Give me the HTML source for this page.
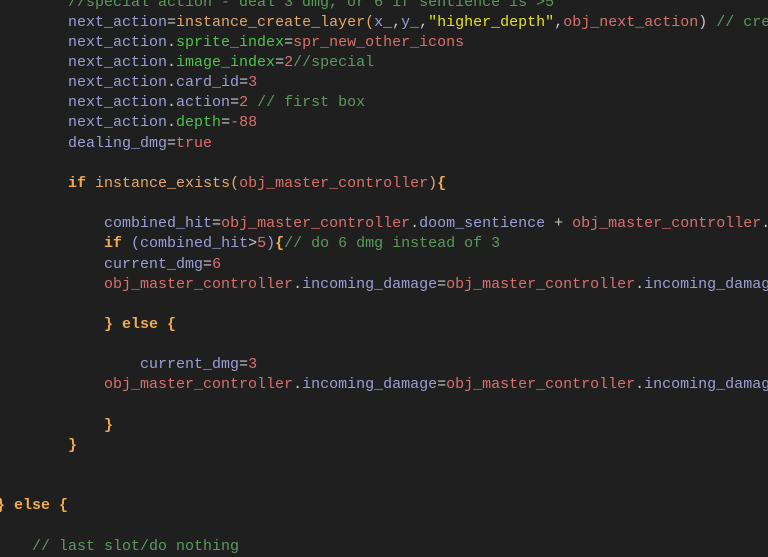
<!DOCTYPE html>
<html><head><meta charset="utf-8"><style>
html,body{margin:0;padding:0;background:#1f1f1f;width:768px;height:550px;overflow:hidden}
pre{position:absolute;left:-4px;top:-7.5px;margin:0;font-family:"Liberation Mono",monospace;font-size:15px;line-height:20.15px;color:#9b9fd6;white-space:pre;filter:blur(0.3px)}
.c{color:#5c9a5c}.f{color:#e3a86e}.g{color:#4fc24f}.r{color:#d9706c}.s{color:#e2e21f}.k{color:#efad4f;font-weight:bold}.p{color:#c8c8c8}
</style></head><body><pre>
        <span class="c">//special action - deal 3 dmg, or 6 if sentience is &gt;5</span>
        next_action<span class="p">=</span><span class="f">instance_create_layer(</span>x_<span class="p">,</span>y_<span class="p">,</span><span class="s">"higher_depth"</span><span class="p">,</span><span class="r">obj_next_action</span><span class="p">)</span> <span class="c">// create</span>
        next_action<span class="p">.</span><span class="g">sprite_index</span><span class="p">=</span><span class="r">spr_new_other_icons</span>
        next_action<span class="p">.</span><span class="g">image_index</span><span class="p">=</span><span class="r">2</span><span class="c">//special</span>
        next_action<span class="p">.</span>card_id<span class="p">=</span><span class="r">3</span>
        next_action<span class="p">.</span>action<span class="p">=</span><span class="r">2</span> <span class="c">// first box</span>
        next_action<span class="p">.</span><span class="g">depth</span><span class="p">=</span><span class="r">-88</span>
        dealing_dmg<span class="p">=</span><span class="r">true</span>

        <span class="k">if</span> <span class="f">instance_exists(</span><span class="r">obj_master_controller</span><span class="f">)</span><span class="k">{</span>

            combined_hit<span class="p">=</span><span class="r">obj_master_controller</span><span class="p">.</span>doom_sentience <span class="p">+</span> <span class="r">obj_master_controller</span><span class="p">.</span>rot
            <span class="k">if</span> (combined_hit<span class="p">&gt;</span><span class="r">5</span>)<span class="k">{</span><span class="c">// do 6 dmg instead of 3</span>
            current_dmg<span class="p">=</span><span class="r">6</span>
            <span class="r">obj_master_controller</span><span class="p">.</span>incoming_damage<span class="p">=</span><span class="r">obj_master_controller</span><span class="p">.</span>incoming_damage

            <span class="k">} else {</span>

                current_dmg<span class="p">=</span><span class="r">3</span>
            <span class="r">obj_master_controller</span><span class="p">.</span>incoming_damage<span class="p">=</span><span class="r">obj_master_controller</span><span class="p">.</span>incoming_damage

            <span class="k">}</span>
        <span class="k">}</span>


<span class="k">} else {</span>

    <span class="c">// last slot/do nothing</span>
</pre></body></html>
